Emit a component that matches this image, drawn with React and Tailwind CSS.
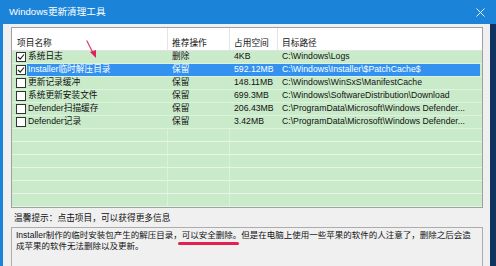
import React from 'react';

const rows = [
  { checked: true, name: '系统日志', op: '删除', size: '4KB', path: 'C:\\Windows\\Logs' },
  { checked: true, name: 'Installer临时解压目录', op: '保留', size: '592.12MB', path: 'C:\\Windows\\Installer\\$PatchCache$', selected: true },
  { checked: false, name: '更新记录缓冲', op: '保留', size: '148.11MB', path: 'C:\\Windows\\WinSxS\\ManifestCache' },
  { checked: false, name: '系统更新安装文件', op: '保留', size: '699.3MB', path: 'C:\\Windows\\SoftwareDistribution\\Download' },
  { checked: false, name: 'Defender扫描缓存', op: '保留', size: '206.43MB', path: 'C:\\ProgramData\\Microsoft\\Windows Defender...' },
  { checked: false, name: 'Defender记录', op: '保留', size: '3.42MB', path: 'C:\\ProgramData\\Microsoft\\Windows Defender...' },
];

const CheckBox = ({ checked }) => (
  <div className="w-[10px] h-[10px] border border-[#333] bg-white flex items-center justify-center shrink-0">
    {checked && (
      <svg width="8" height="8" viewBox="0 0 8 8">
        <path d="M1 4 L3.2 6.2 L7 1.5" fill="none" stroke="#222" strokeWidth="1.1" />
      </svg>
    )}
  </div>
);

const App = () => {
  return (
    <div
      className="w-[496px] h-[266px] overflow-hidden bg-[#10335f] text-[8.7px] text-[#111]"
      style={{ fontFamily: '"Liberation Sans", "Noto Sans CJK SC", sans-serif' }}
    >
      {/* title bar */}
      <div className="h-[24px] bg-[#1b84d8] flex items-center justify-between pl-[9px] pr-[11px] text-white">
        <span className="text-[9.6px]">Windows更新清理工具</span>
        <svg width="9" height="9" viewBox="0 0 9 9">
          <path d="M0.5 0.5 L8.5 8.5 M8.5 0.5 L0.5 8.5" stroke="#e8f2fb" strokeWidth="1" />
        </svg>
      </div>

      <div className="flex h-[242px]">
        <div className="w-[3px] bg-[#1b84d8]" />
        <div className="w-[487px] bg-[#f0f0f0] pl-[8px] pt-[3px] relative">
          {/* list */}
          <div className="w-[472px] h-[181px] border border-[#a0a0a0] bg-[#c9ebca] flex flex-col overflow-hidden">
            <div className="h-[23px] bg-white flex items-end border-b border-[#e2e2e2] shrink-0">
              <div className="w-[156px] h-full pl-[5px] pt-[9px] border-r border-[#e4e4e4]">项目名称</div>
              <div className="w-[62px] h-full pl-[4px] pt-[9px] border-r border-[#e4e4e4]">推荐操作</div>
              <div className="w-[48px] h-full pl-[4px] pt-[9px] border-r border-[#e4e4e4]">占用空间</div>
              <div className="flex-1 h-full pl-[4px] pt-[9px]">目标路径</div>
            </div>
            {rows.map((r) => (
              <div key={r.name} className="h-[13px] flex items-center shrink-0 border-b border-[#ddf3de]">
                <div className="pl-[4px] pr-[1px]">
                  <CheckBox checked={r.checked} />
                </div>
                <div
                  className={`flex h-full items-center mr-[2px] flex-1 ${
                    r.selected ? 'bg-[#3391f0] text-white' : ''
                  }`}
                >
                  <div className="w-[141px] pl-[1px] whitespace-nowrap">{r.name}</div>
                  <div className="w-[62px] pl-[4px]">{r.op}</div>
                  <div className="w-[48px] pl-[4px] whitespace-nowrap">{r.size}</div>
                  <div className="flex-1 pl-[4px] whitespace-nowrap">{r.path}</div>
                </div>
              </div>
            ))}
            {[0, 1, 2, 3, 4, 5].map((i) => (
              <div key={i} className="h-[13px] flex shrink-0 border-b border-[#e6f6e6]">
                <div className="w-[156px] border-r border-[#dcf1dc]" />
                <div className="w-[62px] border-r border-[#dcf1dc]" />
                <div className="w-[48px]" />
              </div>
            ))}
          </div>

          {/* hint */}
          <div className="h-[19px] pl-[3px] pt-[4px]">温馨提示：点击项目，可以获得更多信息</div>

          {/* description */}
          <div className="w-[472px] h-[60px] border border-[#adadad] bg-[#f0f0f0] pl-[4px] pt-[2px] leading-[10.5px] text-[8.5px] relative">
            <div className="whitespace-nowrap">
              Installer制作的临时安装包产生的解压目录，可以安全删除。但是在电脑上使用一些苹果的软件的人注意了，删除之后会造
            </div>
            <div className="whitespace-nowrap">成苹果的软件无法删除以及更新。</div>
            <div className="absolute left-[166px] top-[14px] w-[61px] h-[3px] rounded-full bg-[#e5204f]" />
          </div>

          {/* red arrow annotation */}
          <svg className="absolute left-[81px] top-[16px]" width="16" height="20" viewBox="0 0 16 20">
            <path d="M3 1 L9 13" stroke="#e0305a" strokeWidth="1.4" strokeLinecap="round" opacity="0.85" />
            <path d="M6 12 L12 10 L12 18 Z" fill="#e0205a" />
          </svg>
        </div>
      </div>
    </div>
  );
};

export default App;
